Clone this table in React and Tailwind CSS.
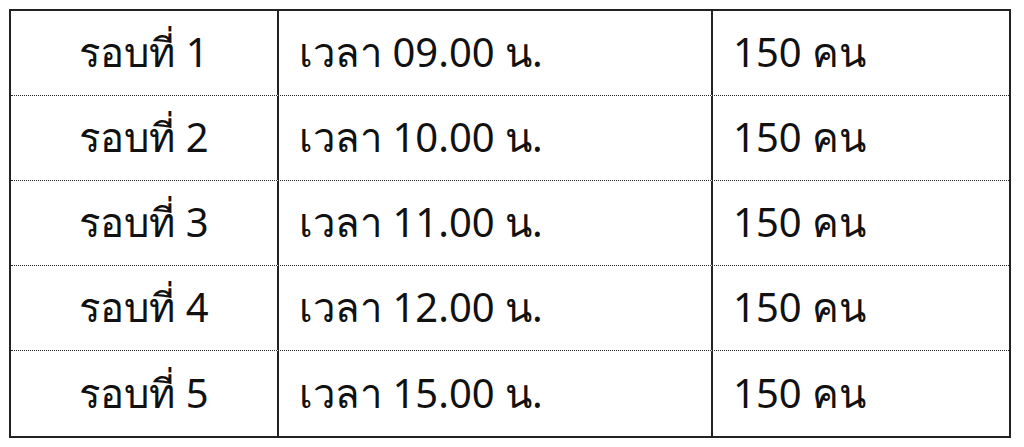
import React from "react";

const rows = [
  { round: "รอบที่ 1", time: "เวลา 09.00 น.", count: "150 คน" },
  { round: "รอบที่ 2", time: "เวลา 10.00 น.", count: "150 คน" },
  { round: "รอบที่ 3", time: "เวลา 11.00 น.", count: "150 คน" },
  { round: "รอบที่ 4", time: "เวลา 12.00 น.", count: "150 คน" },
  { round: "รอบที่ 5", time: "เวลา 15.00 น.", count: "150 คน" },
];

export default function App() {
  return (
    <div
      className="w-[1024px] h-[447px] bg-white pt-[9px] pl-[9px]"
      style={{ fontFamily: '"Noto Sans", "Liberation Sans", sans-serif' }}
    >
      <div className="w-[1002px] border-2 border-[#222] text-[#111] text-[40px] leading-none">
        {rows.map((r, i) => (
          <div
            key={i}
            className={`grid grid-cols-[268px_434px_1fr] h-[85px] ${
              i < rows.length - 1 ? "border-b border-dotted border-[#222]" : ""
            }`}
          >
            <div className="flex items-center justify-center border-r-2 border-[#222] pb-[2px]">
              {r.round}
            </div>
            <div className="flex items-center pl-[20px] border-r-2 border-[#222] pb-[2px]">
              {r.time}
            </div>
            <div className="flex items-center pl-[20px] pb-[2px]">{r.count}</div>
          </div>
        ))}
      </div>
    </div>
  );
}
